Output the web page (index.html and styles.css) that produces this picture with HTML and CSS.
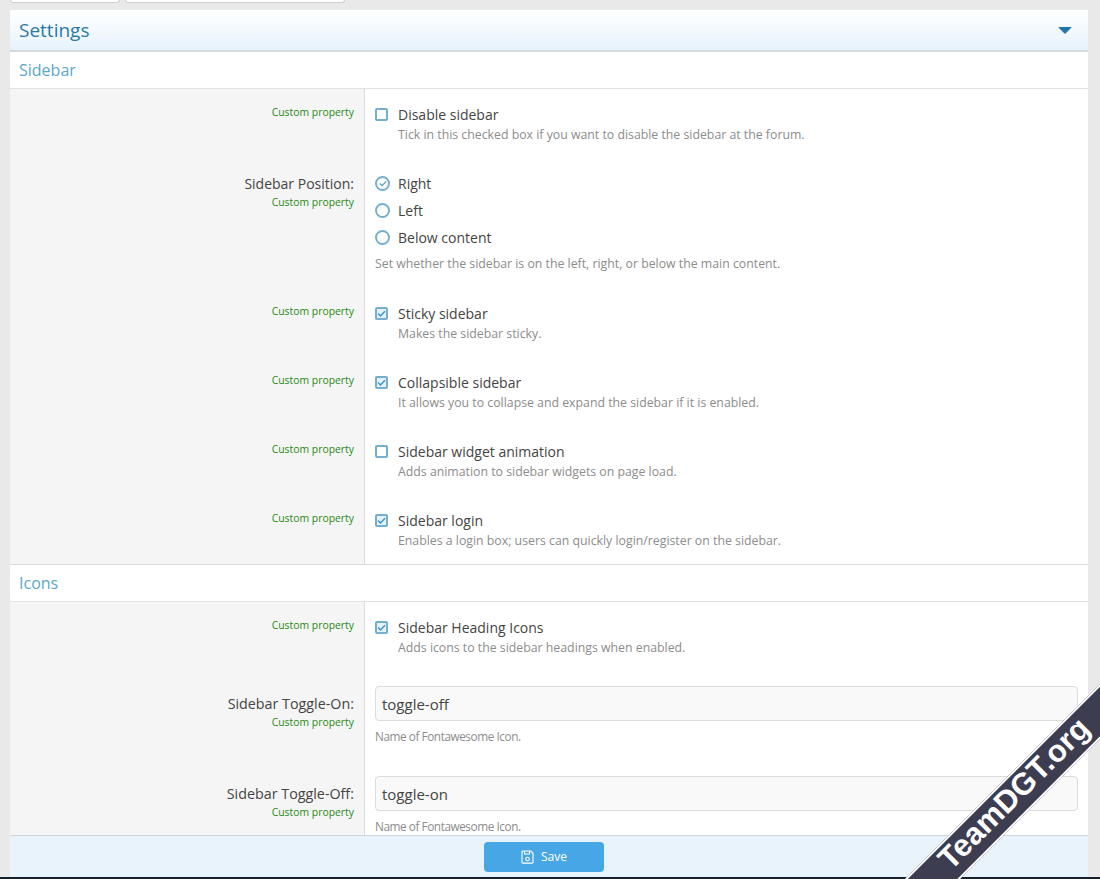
FILE: index.html
```html
<!DOCTYPE html>
<html lang="en">
  <head>
    <meta charset="UTF-8" />
    <meta name="viewport" content="width=device-width, initial-scale=1.0" />
    <title>Settings</title>
    <link rel="stylesheet" href="styles.css">
  </head>
  <body>
    <div class="tabs">
      <div class="tab tab-small"></div>
      <div class="tab tab-wide"></div>
    </div>

    <form class="card">
      <div class="card-header">
        <h2>Settings</h2>
        <svg class="caret" width="14" height="8" viewBox="0 0 14 8"><path d="M1 1.5h12L7 7.5z" fill="#1b75a8" stroke="#1b75a8" stroke-linejoin="round"/></svg>
      </div>

      <div class="card-body">
        <h3 class="section">Sidebar</h3>

        <div class="row row-check">
          <div class="row-label"><span class="custom">Custom property</span></div>
          <div class="row-field">
            <div class="option"><span class="box"></span>Disable sidebar</div>
            <p class="hint hint-indent">Tick in this checked box if you want to disable the sidebar at the forum.</p>
          </div>
        </div>

        <div class="row row-radio">
          <div class="row-label">
            <label>Sidebar Position:</label>
            <span class="custom">Custom property</span>
          </div>
          <div class="row-field">
            <div class="option option-radio">
              <span class="radio"><svg width="10" height="8" viewBox="0 0 10 8"><path d="M1 4l2.8 2.8L9 1.4" fill="none" stroke="#4a9cc4" stroke-width="1.5"/></svg></span>Right
            </div>
            <div class="option option-radio"><span class="radio"></span>Left</div>
            <div class="option option-radio"><span class="radio"></span>Below content</div>
            <p class="hint hint-radio">Set whether the sidebar is on the left, right, or below the main content.</p>
          </div>
        </div>

        <div class="row row-check">
          <div class="row-label"><span class="custom">Custom property</span></div>
          <div class="row-field">
            <div class="option"><span class="box box-on"><svg width="10" height="8" viewBox="0 0 10 8"><path d="M1 4l2.8 2.8L9 1.4" fill="none" stroke="#3d94c0" stroke-width="1.6"/></svg></span>Sticky sidebar</div>
            <p class="hint hint-indent">Makes the sidebar sticky.</p>
          </div>
        </div>

        <div class="row row-check">
          <div class="row-label"><span class="custom">Custom property</span></div>
          <div class="row-field">
            <div class="option"><span class="box box-on"><svg width="10" height="8" viewBox="0 0 10 8"><path d="M1 4l2.8 2.8L9 1.4" fill="none" stroke="#3d94c0" stroke-width="1.6"/></svg></span>Collapsible sidebar</div>
            <p class="hint hint-indent">It allows you to collapse and expand the sidebar if it is enabled.</p>
          </div>
        </div>

        <div class="row row-check">
          <div class="row-label"><span class="custom">Custom property</span></div>
          <div class="row-field">
            <div class="option"><span class="box"></span>Sidebar widget animation</div>
            <p class="hint hint-indent">Adds animation to sidebar widgets on page load.</p>
          </div>
        </div>

        <div class="row row-check">
          <div class="row-label"><span class="custom">Custom property</span></div>
          <div class="row-field">
            <div class="option"><span class="box box-on"><svg width="10" height="8" viewBox="0 0 10 8"><path d="M1 4l2.8 2.8L9 1.4" fill="none" stroke="#3d94c0" stroke-width="1.6"/></svg></span>Sidebar login</div>
            <p class="hint hint-indent">Enables a login box; users can quickly login/register on the sidebar.</p>
          </div>
        </div>

        <h3 class="section section-next">Icons</h3>

        <div class="row row-check">
          <div class="row-label"><span class="custom">Custom property</span></div>
          <div class="row-field">
            <div class="option"><span class="box box-on"><svg width="10" height="8" viewBox="0 0 10 8"><path d="M1 4l2.8 2.8L9 1.4" fill="none" stroke="#3d94c0" stroke-width="1.6"/></svg></span>Sidebar Heading Icons</div>
            <p class="hint hint-indent">Adds icons to the sidebar headings when enabled.</p>
          </div>
        </div>

        <div class="row row-text">
          <div class="row-label">
            <label>Sidebar Toggle-On:</label>
            <span class="custom">Custom property</span>
          </div>
          <div class="row-field">
            <input class="text-input" type="text" value="toggle-off" />
            <p class="hint hint-name">Name of Fontawesome Icon.</p>
          </div>
        </div>

        <div class="row row-text">
          <div class="row-label">
            <label>Sidebar Toggle-Off:</label>
            <span class="custom">Custom property</span>
          </div>
          <div class="row-field">
            <input class="text-input" type="text" value="toggle-on" />
            <p class="hint hint-name">Name of Fontawesome Icon.</p>
          </div>
        </div>
      </div>

      <div class="card-footer">
        <button class="btn-save" type="button">
          <svg width="13" height="14" viewBox="0 0 13 14" fill="none" stroke="#fff" stroke-width="1.1"><path d="M1.5 1h8.2L12 3.3v8.9a.9.9 0 0 1-.9.9H1.9a.9.9 0 0 1-.9-.9V1.5z"/><path d="M3.5 1v3h5V1"/><circle cx="6.5" cy="9" r="1.8"/></svg>
          Save
        </button>
      </div>
    </form>

    <div class="bottom-strip"></div>

    <div class="ribbon-clip">
      <div class="ribbon">TeamDGT.org</div>
    </div>
  </body>
</html>
```

FILE: styles.css
```css
* {
  box-sizing: border-box;
}

body {
  margin: 0;
  height: 879px;
  overflow: hidden;
  position: relative;
  display: flex;
  flex-direction: column;
  background: #e9e9e9;
  font-family: "Open Sans", "Noto Sans", sans-serif;
  color: #333;
}

.tabs {
  display: flex;
  gap: 5px;
  height: 10px;
  padding-left: 10px;
  flex-shrink: 0;
}

.tab {
  height: 3px;
  background: #fff;
  border: 1px solid #cfcfcf;
  border-top: none;
  border-radius: 0 0 4px 4px;
}

.tab-small {
  width: 110px;
}

.tab-wide {
  width: 220px;
}

.card {
  flex: 1;
  min-height: 0;
  width: 1078px;
  margin-left: 10px;
  display: flex;
  flex-direction: column;
  background: #fff;
}

.card-header {
  height: 42px;
  flex-shrink: 0;
  display: flex;
  align-items: center;
  justify-content: space-between;
  padding: 0 16px 0 9px;
  background: linear-gradient(to bottom, #ffffff, #e6f3fb);
  border-bottom: 2px solid #d8d8dc;
}

.card-header h2 {
  margin: 0;
  font-size: 19px;
  font-weight: 400;
  color: #2c7aa3;
}

.card-body {
  flex: 1;
  min-height: 0;
  overflow: hidden;
}

.section {
  margin: 0;
  height: 37px;
  line-height: 36px;
  padding-left: 9px;
  font-size: 16px;
  font-weight: 400;
  color: #5aa7cc;
  border-bottom: 1px solid #e2e2e2;
}

.section-next {
  height: 38px;
  line-height: 37px;
  border-top: 1px solid #d9d9d9;
}

.row {
  display: grid;
  grid-template-columns: 355px 1fr;
}

.row-check {
  height: 69px;
}

.row-radio {
  height: 130px;
}

.row-text {
  height: 90px;
}

.row-label {
  background: #f5f5f5;
  border-right: 1px solid #dcdcdc;
  padding: 15px 10px 0;
  text-align: right;
  display: flex;
  flex-direction: column;
  align-items: flex-end;
}

.row-check .row-label {
  padding-top: 16px;
}

.row-radio .row-label {
  padding-top: 16px;
}

.row-text .row-label {
  padding-top: 23px;
}

.row-label label {
  font-size: 14px;
  line-height: 20px;
  color: #444;
}

.row-text .row-label label {
  font-size: 14.3px;
}

.custom {
  font-size: 10.4px;
  line-height: 14px;
  color: #1f8a12;
}

.row-radio .custom,
.row-text .custom {
  margin-top: 1px;
}

.row-field {
  padding: 15px 10px 0;
}

.option {
  display: flex;
  align-items: center;
  height: 20px;
  font-size: 14px;
  color: #444;
}

.option-radio {
  height: 27px;
}

.row-radio .row-field {
  padding-top: 12px;
}

.box {
  width: 13px;
  height: 13px;
  margin-right: 10px;
  display: flex;
  align-items: center;
  justify-content: center;
  border: 2px solid #74afcf;
  border-radius: 2px;
  background: #fff;
}

.box-on {
  background: #e3f1f9;
}

.box svg {
  width: 9px;
  height: 7px;
  flex-shrink: 0;
}

.radio {
  width: 15px;
  height: 15px;
  margin-right: 8px;
  display: flex;
  align-items: center;
  justify-content: center;
  border: 2px solid #74afcf;
  border-radius: 50%;
}

.radio svg {
  width: 8px;
  height: 7px;
}

.hint {
  margin: 1px 0 0;
  font-size: 12.3px;
  line-height: 20px;
  color: #8c8c8c;
}

.hint-indent {
  padding-left: 23px;
}

.hint-radio {
  margin-top: 3px;
}

.hint-name {
  font-size: 11.8px;
  letter-spacing: -0.45px;
}

.text-input {
  display: block;
  width: 100%;
  height: 35px;
  padding: 0 6px;
  font-family: inherit;
  font-size: 15px;
  color: #444;
  background: #f9f9f9;
  border: 1px solid #dcdcdc;
  border-radius: 4px;
  margin-bottom: 5px;
}

.card-footer {
  height: 42px;
  flex-shrink: 0;
  display: flex;
  align-items: center;
  justify-content: center;
  padding-right: 10px;
  background: #e8f3fb;
  border-top: 1px solid #cfd4d8;
}

.btn-save {
  width: 120px;
  height: 30px;
  display: flex;
  align-items: center;
  justify-content: center;
  gap: 7px;
  font-family: inherit;
  font-size: 12px;
  color: #fff;
  background: #47a7e6;
  border: none;
  border-radius: 4px;
}

.bottom-strip {
  height: 2px;
  flex-shrink: 0;
  background: #14202b;
}

.ribbon-clip {
  position: absolute;
  inset: 0;
  overflow: hidden;
  pointer-events: none;
}

.ribbon {
  position: absolute;
  left: 846px;
  top: 776px;
  width: 340px;
  height: 39px;
  line-height: 30px;
  text-align: center;
  transform: rotate(-45deg);
  background: #3d3d52;
  border-top: 2px solid #fff;
  border-bottom: 2px solid #fff;
  color: #fff;
  font-family: "Liberation Sans", sans-serif;
  font-size: 31px;
  font-weight: 700;
}
```
